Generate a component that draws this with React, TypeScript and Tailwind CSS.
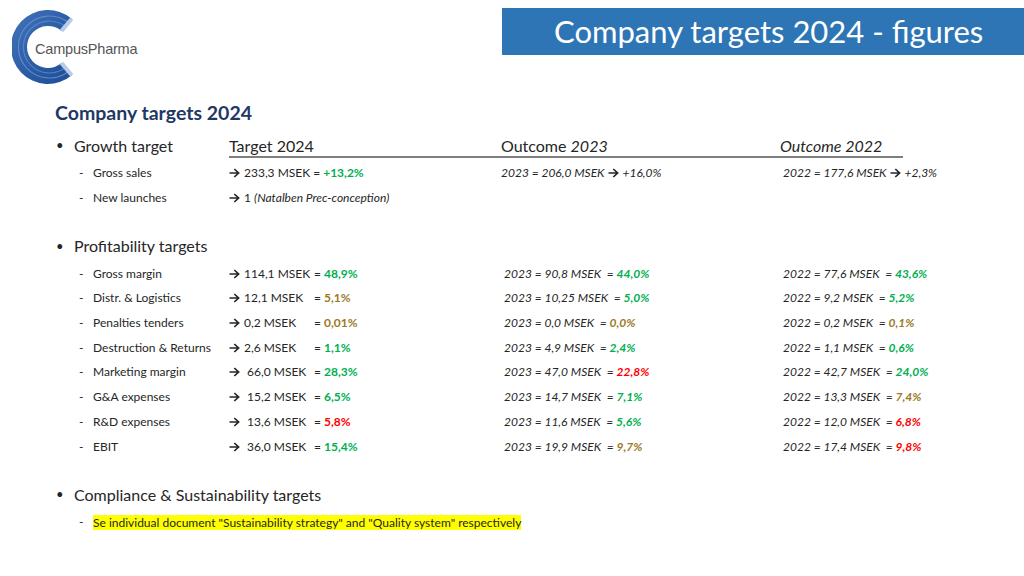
import React from "react";

const GREEN = "text-[#00b050]";
const GOLD = "text-[#9c7a1f]";
const RED = "text-[#ff0000]";

function Arrow({ className = "" }: { className?: string }) {
  return (
    <svg width="11" height="10" viewBox="0 0 11 10" className={"inline-block mr-[4px] " + className}>
      <path d="M0.5 5 H9.3 M5.3 1 L9.6 5 L5.3 9" fill="none" stroke="#262626" strokeWidth="1.7" />
    </svg>
  );
}

function Logo() {
  return (
    <div className="relative w-[130px] h-[80px]">
      <svg width="80" height="80" viewBox="0 0 80 80" className="absolute left-0 top-0">
        <defs>
          <linearGradient id="lg" x1="0" y1="0" x2="1" y2="1">
            <stop offset="0" stopColor="#4374bb" />
            <stop offset="0.6" stopColor="#2a5aa3" />
            <stop offset="1" stopColor="#1f4d97" />
          </linearGradient>
        </defs>
        <path
          d="M59.8 8.7 A37 37 0 1 0 59.8 65.3 L49.5 53.1 A21 21 0 1 1 49.5 20.9 Z"
          fill="url(#lg)"
        />
        <path d="M57 13 A31 31 0 1 0 57 61" fill="none" stroke="#6e9ad6" strokeWidth="1.2" opacity="0.7" />
        <path d="M54 17 A26 26 0 1 0 54 57" fill="none" stroke="#6e9ad6" strokeWidth="1.2" opacity="0.6" />
        <path d="M59.8 8.7 L49.5 20.9" stroke="#b8cdea" strokeWidth="4" />
        <path d="M59.8 65.3 L49.5 53.1" stroke="#b8cdea" strokeWidth="4" />
      </svg>
      <div
        className="absolute left-[23px] top-[29px] text-[14.5px] text-[#555] tracking-[-0.2px]"
        style={{ fontFamily: "'Liberation Sans', Arial, sans-serif" }}
      >
        CampusPharma
      </div>
    </div>
  );
}

type Row = {
  label: string;
  val: string;
  pct: string;
  pc: string;
  o23: string;
  p23: string;
  c23: string;
  o22: string;
  p22: string;
  c22: string;
};

const rows: Row[] = [
  { label: "Gross margin", val: "114,1 MSEK", pct: "48,9%", pc: GREEN, o23: "2023 = 90,8 MSEK", p23: "44,0%", c23: GREEN, o22: "2022 = 77,6 MSEK", p22: "43,6%", c22: GREEN },
  { label: "Distr. & Logistics", val: "12,1 MSEK", pct: "5,1%", pc: GOLD, o23: "2023 = 10,25 MSEK", p23: "5,0%", c23: GREEN, o22: "2022 = 9,2 MSEK", p22: "5,2%", c22: GREEN },
  { label: "Penalties tenders", val: "0,2 MSEK", pct: "0,01%", pc: GOLD, o23: "2023 = 0,0 MSEK", p23: "0,0%", c23: GOLD, o22: "2022 = 0,2 MSEK", p22: "0,1%", c22: GOLD },
  { label: "Destruction & Returns", val: "2,6 MSEK", pct: "1,1%", pc: GREEN, o23: "2023 = 4,9 MSEK", p23: "2,4%", c23: GREEN, o22: "2022 = 1,1 MSEK", p22: "0,6%", c22: GREEN },
  { label: "Marketing margin", val: " 66,0 MSEK", pct: "28,3%", pc: GREEN, o23: "2023 = 47,0 MSEK", p23: "22,8%", c23: RED, o22: "2022 = 42,7 MSEK", p22: "24,0%", c22: GREEN },
  { label: "G&A expenses", val: " 15,2 MSEK", pct: "6,5%", pc: GREEN, o23: "2023 = 14,7 MSEK", p23: "7,1%", c23: GREEN, o22: "2022 = 13,3 MSEK", p22: "7,4%", c22: GOLD },
  { label: "R&D expenses", val: " 13,6 MSEK", pct: "5,8%", pc: RED, o23: "2023 = 11,6 MSEK", p23: "5,6%", c23: GREEN, o22: "2022 = 12,0 MSEK", p22: "6,8%", c22: RED },
  { label: "EBIT", val: " 36,0 MSEK", pct: "15,4%", pc: GREEN, o23: "2023 = 19,9 MSEK", p23: "9,7%", c23: GOLD, o22: "2022 = 17,4 MSEK", p22: "9,8%", c22: RED },
];

function SubRow({ children }: { children: React.ReactNode }) {
  return <div className="flex items-center h-[24.7px] text-[12px] text-[#262626]">{children}</div>;
}

function Dash() {
  return <div className="w-[93px] pl-[79px] shrink-0">-</div>;
}

function Bullet({ children }: { children: React.ReactNode }) {
  return (
    <div className="flex items-center text-[16px] text-[#262626] h-[22px]">
      <div className="w-[74px] pl-[56px] shrink-0 text-[13px]">•</div>
      {children}
    </div>
  );
}

export default function App() {
  return (
    <div
      className="w-[1024px] h-[576px] bg-white overflow-hidden relative"
      style={{ fontFamily: "Lato, 'Liberation Sans', sans-serif" }}
    >
      <div className="flex justify-between pt-[8px] h-[88px]">
        <div className="pl-[12px] pt-[2px]">
          <Logo />
        </div>
        <div className="w-[522px] h-[47px] bg-[#2e75b6] flex items-center pl-[52px] text-white text-[31px]">
          Company targets 2024 - figures
        </div>
      </div>

      <div className="pl-[55px] mt-[13px] text-[19.5px] font-bold text-[#1f3864] leading-[24px]">
        Company targets 2024
      </div>

      <div className="mt-[10px]">
        <Bullet>
          <div className="flex-1 flex items-end">
            <div className="w-[155px]">Growth target</div>
            <div className="flex items-end border-b-2 border-[#7f7f7f] w-[674px] leading-[20px]">
              <div className="w-[272px]">Target 2024</div>
              <div className="w-[279px]">
                Outcome <span className="italic">2023</span>
              </div>
              <div className="italic">Outcome 2022</div>
            </div>
          </div>
        </Bullet>
      </div>

      <div className="mt-[4px]">
        <SubRow>
          <Dash />
          <div className="w-[136px] shrink-0">Gross sales</div>
          <div className="w-[272px] shrink-0 flex items-center">
            <Arrow />
            233,3 MSEK = <span className={"font-bold ml-[3px] " + GREEN}>+13,2%</span>
          </div>
          <div className="w-[282px] shrink-0 italic flex items-center">
            2023 = 206,0 MSEK <Arrow className="ml-[3px]" />
            +16,0%
          </div>
          <div className="italic flex items-center">
            2022 = 177,6 MSEK <Arrow className="ml-[3px]" />
            +2,3%
          </div>
        </SubRow>
        <SubRow>
          <Dash />
          <div className="w-[136px] shrink-0">New launches</div>
          <div className="flex items-center">
            <Arrow />1&nbsp;<span className="italic">(Natalben Prec-conception)</span>
          </div>
        </SubRow>
      </div>

      <div className="mt-[25px]">
        <Bullet>Profitability targets</Bullet>
      </div>

      <div className="mt-[4px]">
        {rows.map((r) => (
          <SubRow key={r.label}>
            <Dash />
            <div className="w-[136px] shrink-0">{r.label}</div>
            <div className="w-[275px] shrink-0 flex items-center">
              <div className="w-[85px] shrink-0 flex items-center whitespace-pre">
                <Arrow />
                {r.val}
              </div>
              <span>= </span>
              <span className={"font-bold ml-[3px] " + r.pc}>{r.pct}</span>
            </div>
            <div className="w-[279px] shrink-0 italic whitespace-pre">
              {r.o23}  = <span className={"font-bold " + r.c23}>{r.p23}</span>
            </div>
            <div className="italic whitespace-pre">
              {r.o22}  = <span className={"font-bold " + r.c22}>{r.p22}</span>
            </div>
          </SubRow>
        ))}
      </div>

      <div className="mt-[25px]">
        <Bullet>Compliance &amp; Sustainability targets</Bullet>
      </div>
      <div className="mt-[4px]">
        <SubRow>
          <Dash />
          <span className="bg-[#ffff00] leading-[15px]">
            Se individual document "Sustainability strategy" and "Quality system" respectively
          </span>
        </SubRow>
      </div>
    </div>
  );
}
